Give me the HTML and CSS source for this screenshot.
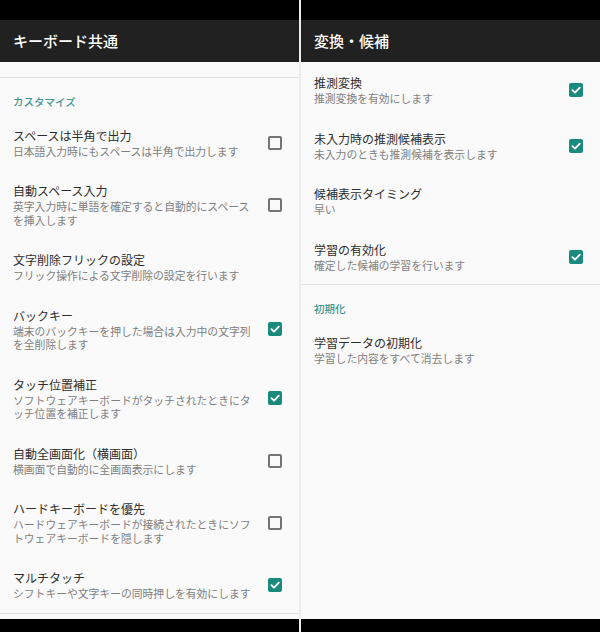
FILE: index.html
```html
<!DOCTYPE html>
<html lang="ja">
<head>
    <meta charset="UTF-8">
    <meta name="viewport" content="width=device-width, initial-scale=1.0">
    <title>設定</title>
    <link rel="stylesheet" href="styles.css">
</head>
<body>
    <div class="screens">
        <!-- キーボード共通 -->
        <div class="screen">
            <div class="status-bar"></div>
            <header class="toolbar">キーボード共通</header>
            <div class="content">
                <div class="scrolled"></div>
                <div class="category">カスタマイズ</div>

                <div class="pref">
                    <div class="pref-text">
                        <div class="pref-title">スペースは半角で出力</div>
                        <div class="pref-summary">日本語入力時にもスペースは半角で出力します</div>
                    </div>
                    <span class="checkbox"></span>
                </div>
                <div class="pref">
                    <div class="pref-text">
                        <div class="pref-title">自動スペース入力</div>
                        <div class="pref-summary">英字入力時に単語を確定すると自動的にスペースを挿入します</div>
                    </div>
                    <span class="checkbox"></span>
                </div>
                <div class="pref">
                    <div class="pref-text">
                        <div class="pref-title">文字削除フリックの設定</div>
                        <div class="pref-summary">フリック操作による文字削除の設定を行います</div>
                    </div>
                </div>
                <div class="pref">
                    <div class="pref-text">
                        <div class="pref-title">バックキー</div>
                        <div class="pref-summary">端末のバックキーを押した場合は入力中の文字列を全削除します</div>
                    </div>
                    <span class="checkbox checked"><svg viewBox="0 0 14 14"><polyline points="3.4,7.2 6,9.7 10.8,4.6"/></svg></span>
                </div>
                <div class="pref">
                    <div class="pref-text">
                        <div class="pref-title">タッチ位置補正</div>
                        <div class="pref-summary">ソフトウェアキーボードがタッチされたときにタッチ位置を補正します</div>
                    </div>
                    <span class="checkbox checked"><svg viewBox="0 0 14 14"><polyline points="3.4,7.2 6,9.7 10.8,4.6"/></svg></span>
                </div>
                <div class="pref">
                    <div class="pref-text">
                        <div class="pref-title">自動全画面化（横画面）</div>
                        <div class="pref-summary">横画面で自動的に全画面表示にします</div>
                    </div>
                    <span class="checkbox"></span>
                </div>
                <div class="pref">
                    <div class="pref-text">
                        <div class="pref-title">ハードキーボードを優先</div>
                        <div class="pref-summary">ハードウェアキーボードが接続されたときにソフトウェアキーボードを隠します</div>
                    </div>
                    <span class="checkbox"></span>
                </div>
                <div class="pref last">
                    <div class="pref-text">
                        <div class="pref-title">マルチタッチ</div>
                        <div class="pref-summary">シフトキーや文字キーの同時押しを有効にします</div>
                    </div>
                    <span class="checkbox checked"><svg viewBox="0 0 14 14"><polyline points="3.4,7.2 6,9.7 10.8,4.6"/></svg></span>
                </div>
            </div>
            <div class="nav-bar"></div>
        </div>

        <!-- 変換・候補 -->
        <div class="screen">
            <div class="status-bar"></div>
            <header class="toolbar">変換・候補</header>
            <div class="content">
                <div class="pref">
                    <div class="pref-text">
                        <div class="pref-title">推測変換</div>
                        <div class="pref-summary">推測変換を有効にします</div>
                    </div>
                    <span class="checkbox checked"><svg viewBox="0 0 14 14"><polyline points="3.4,7.2 6,9.7 10.8,4.6"/></svg></span>
                </div>
                <div class="pref">
                    <div class="pref-text">
                        <div class="pref-title">未入力時の推測候補表示</div>
                        <div class="pref-summary">未入力のときも推測候補を表示します</div>
                    </div>
                    <span class="checkbox checked"><svg viewBox="0 0 14 14"><polyline points="3.4,7.2 6,9.7 10.8,4.6"/></svg></span>
                </div>
                <div class="pref">
                    <div class="pref-text">
                        <div class="pref-title">候補表示タイミング</div>
                        <div class="pref-summary">早い</div>
                    </div>
                </div>
                <div class="pref last">
                    <div class="pref-text">
                        <div class="pref-title">学習の有効化</div>
                        <div class="pref-summary">確定した候補の学習を行います</div>
                    </div>
                    <span class="checkbox checked"><svg viewBox="0 0 14 14"><polyline points="3.4,7.2 6,9.7 10.8,4.6"/></svg></span>
                </div>

                <div class="category">初期化</div>
                <div class="pref">
                    <div class="pref-text">
                        <div class="pref-title">学習データの初期化</div>
                        <div class="pref-summary">学習した内容をすべて消去します</div>
                    </div>
                </div>
            </div>
            <div class="nav-bar"></div>
        </div>
    </div>
</body>
</html>
```

FILE: styles.css
```css
html, body {
    margin: 0;
    padding: 0;
    height: 100%;
}
body {
    font-family: "Noto Sans CJK JP", "Noto Sans", sans-serif;
    background-color: #ececec;
}
.screens {
    display: flex;
    gap: 2px;
    height: 632px;
}
.screen {
    flex: 1;
    display: flex;
    flex-direction: column;
    min-width: 0;
}
.status-bar {
    height: 20px;
    background-color: #000;
}
.toolbar {
    height: 42px;
    background-color: #212121;
    color: #fff;
    font-size: 15px;
    font-weight: 500;
    line-height: 42px;
    padding-left: 13px;
}
.content {
    flex: 1;
    background-color: #fafafa;
    overflow: hidden;
}
.nav-bar {
    height: 13px;
    background-color: #000;
}

/* item scrolled up under the toolbar */
.scrolled {
    height: 15px;
    border-bottom: 1px solid #e2e2e2;
}

.category {
    padding: 17px 0 5.5px 13px;
    font-size: 10.5px;
    line-height: 14px;
    font-weight: 500;
    color: #3f978d;
}

.pref {
    display: flex;
    align-items: center;
    gap: 12px;
    padding: 12.25px 17px 11.75px 13px;
}
.pref.last {
    border-bottom: 1px solid #e2e2e2;
}
.pref-text {
    flex: 1;
    min-width: 0;
    line-break: loose;
}
.pref-title {
    font-size: 12px;
    line-height: 18px;
    color: #2e2e2e;
}
.pref-summary {
    font-size: 10.8px;
    line-height: 13.5px;
    color: #808080;
}

.checkbox {
    flex: none;
    width: 14px;
    height: 14px;
    box-sizing: border-box;
    border: 2px solid #747474;
    border-radius: 2px;
}
.checkbox.checked {
    border: none;
    background-color: #1b8a7e;
}
.checkbox svg {
    display: block;
    width: 14px;
    height: 14px;
}
.checkbox polyline {
    fill: none;
    stroke: #fff;
    stroke-width: 1.8;
    stroke-linecap: round;
    stroke-linejoin: round;
}
```
